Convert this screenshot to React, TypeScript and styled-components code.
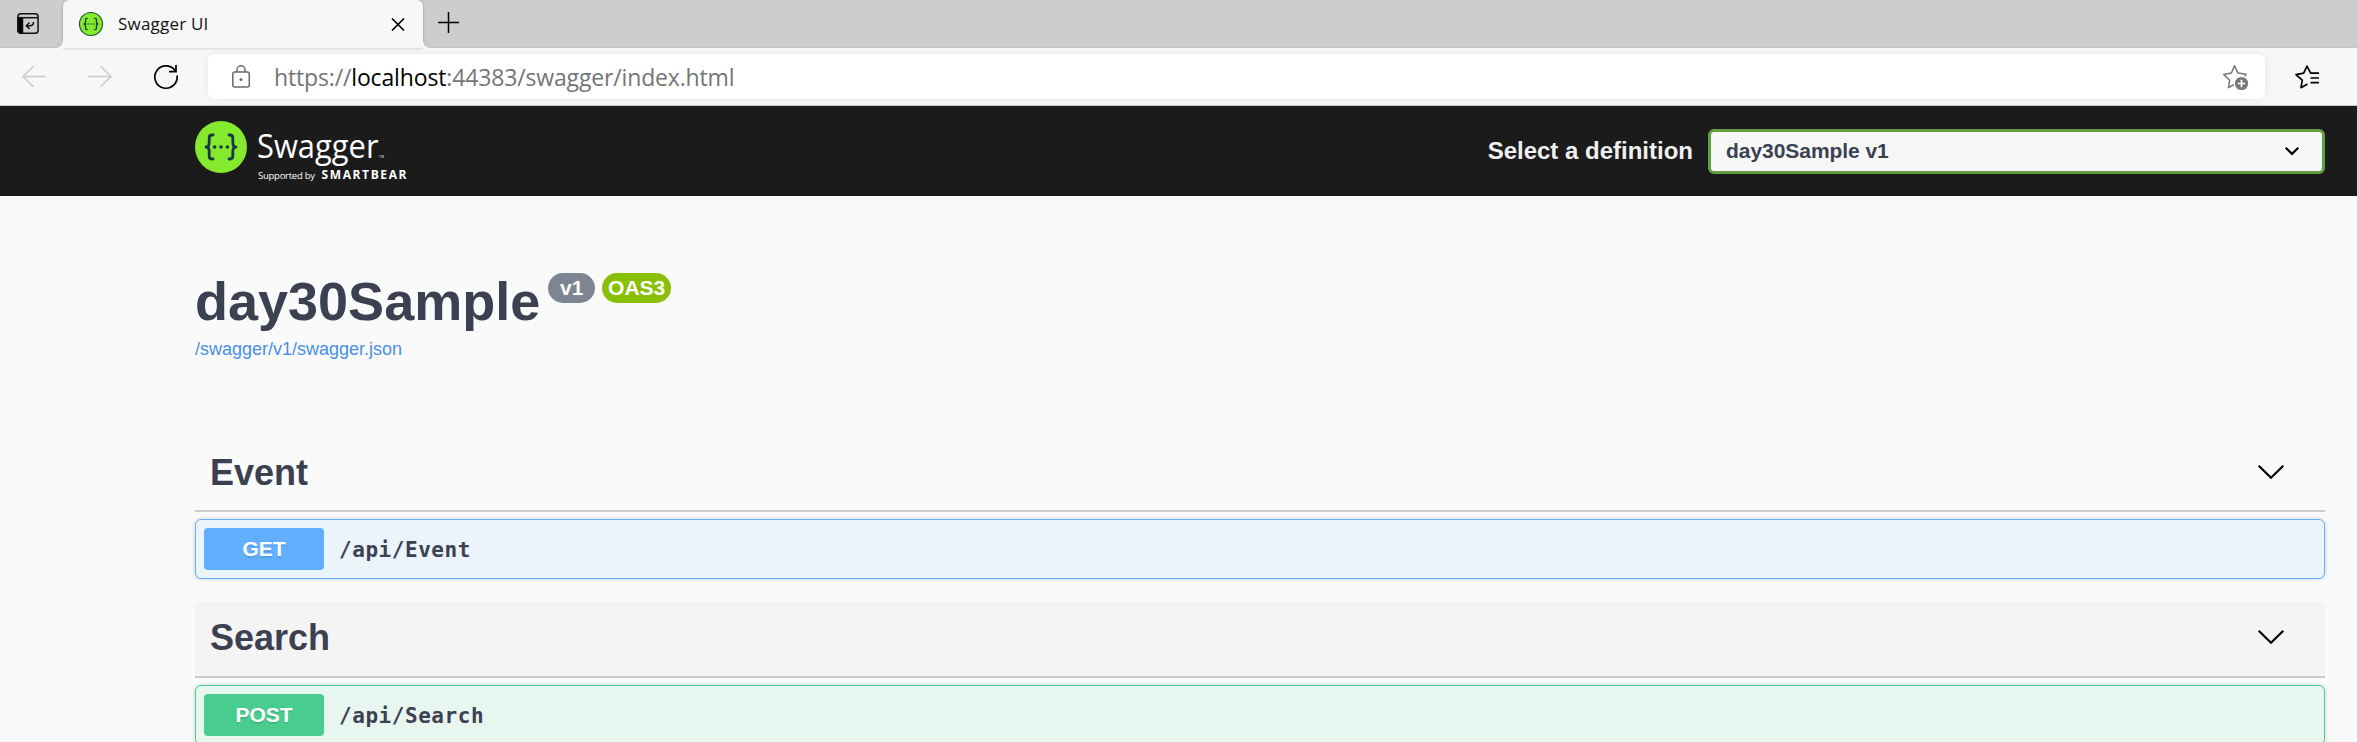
import React from "react";
import styled, { createGlobalStyle } from "styled-components";

const Global = createGlobalStyle`
  *, *::before, *::after { box-sizing: border-box; }
  html, body { margin: 0; padding: 0; background: #fafafa; }
  body { height: 742px; overflow: hidden; font-family: "Liberation Sans", Arial, sans-serif; color: #3b4151; }
  h1, h2 { margin: 0; }
  svg { display: block; flex: none; overflow: visible; }
`;

const Window = styled.div`
  width: 2357px;
  height: 742px;
  overflow: hidden;
  display: flex;
  flex-direction: column;
`;

const TabStrip = styled.div`
  flex: none;
  height: 48px;
  display: flex;
  background: #cdcdcd;
  box-shadow: inset 0 -1px 1px #c2c2c2;
`;

const TabActions = styled.div`
  width: 63px;
  padding: 13px 0 0 17px;
`;

const Tab = styled.div`
  position: relative;
  width: 360px;
  height: 48px;
  display: flex;
  align-items: center;
  padding: 0 18px 0 16px;
  background: #f7f7f7;
  border-radius: 6px 6px 0 0;
  box-shadow: 0 0 3px rgba(0, 0, 0, 0.25);

  &::before,
  &::after {
    content: "";
    position: absolute;
    bottom: 0;
    width: 6px;
    height: 6px;
  }
  &::before {
    left: -6px;
    background: radial-gradient(circle at 0 0, #c6c6c6 5px, #f7f7f7 6px);
  }
  &::after {
    right: -6px;
    background: radial-gradient(circle at 100% 0, #c6c6c6 5px, #f7f7f7 6px);
  }
`;

const TabTitle = styled.span`
  flex: 1;
  margin-left: 15px;
  font: 17px/24px "Open Sans", sans-serif;
  letter-spacing: 0.2px;
  color: #111;
  white-space: nowrap;
`;

const NewTab = styled.div`
  padding: 12px 0 0 15px;
`;

const Toolbar = styled.div`
  flex: none;
  height: 58px;
  display: flex;
  align-items: flex-start;
  padding-top: 6px;
  background: #f7f7f7;
  border-bottom: 1px solid #c6c9c6;
`;

const NavButtons = styled.div`
  width: 208px;
  height: 45px;
  display: flex;
  align-items: center;
  padding-left: 22px;
  gap: 42px;
`;

const AddressBar = styled.div`
  width: 2057px;
  height: 45px;
  display: flex;
  align-items: center;
  padding: 0 16px 0 23px;
  background: #fff;
  border-radius: 6px;
  box-shadow: 0 0 8px rgba(0, 0, 0, 0.07);
`;

const Url = styled.span`
  flex: 1;
  margin-left: 23px;
  font: 23px/32px "Open Sans", sans-serif;
  letter-spacing: -0.15px;
  color: #757575;
  white-space: nowrap;
`;

const Host = styled.span`
  color: #000;
`;

const Favorites = styled.div`
  height: 45px;
  display: flex;
  align-items: center;
  margin-left: 30px;
`;

const TopBar = styled.header`
  flex: none;
  height: 90px;
  display: flex;
  align-items: center;
  justify-content: space-between;
  padding: 0 32px 0 195px;
  background: #1b1b1b;
`;

const Definition = styled.label`
  display: flex;
  align-items: center;
  font-size: 24px;
  font-weight: 700;
  color: #f0f0f0;
`;

const Select = styled.div`
  width: 617px;
  height: 45px;
  margin-left: 15px;
  padding: 0 23px 0 15px;
  display: flex;
  align-items: center;
  justify-content: space-between;
  background: #f7f7f7;
  border: 3px solid #62a03f;
  border-radius: 6px;
  font-size: 21px;
  letter-spacing: -0.05px;
  color: #3b4151;
`;

const Page = styled.main`
  padding: 74px 32px 0 195px;
`;

const Info = styled.section`
  height: 167px;
`;

const TitleRow = styled.div`
  display: flex;
  align-items: flex-start;
`;

const Title = styled.h1`
  font-size: 54px;
  line-height: 62px;
  font-weight: 700;
`;

const Badge = styled.span<{ $bg: string; $width: number; $gap: number }>`
  width: ${(p) => p.$width}px;
  height: 30px;
  margin: 3px 0 0 ${(p) => p.$gap}px;
  border-radius: 15px;
  background: ${(p) => p.$bg};
  color: #fff;
  font-size: 21px;
  font-weight: 700;
  line-height: 30px;
  text-align: center;
`;

const SpecLink = styled.a`
  display: block;
  margin-top: 5px;
  font-size: 18px;
  line-height: 24px;
  color: #4990e2;
`;

const TagHeader = styled.div<{ $hovered?: boolean }>`
  height: ${(p) => (p.$hovered ? 76 : 75)}px;
  display: flex;
  align-items: center;
  justify-content: space-between;
  padding: 0 41px 2px 15px;
  background: ${(p) => (p.$hovered ? "#f4f4f4" : "transparent")};
  border-bottom: 2px solid #c9cacd;

  svg {
    margin-bottom: 2px;
  }
`;

const TagName = styled.h2`
  font-size: 36px;
  line-height: 42px;
`;

const Operation = styled.div<{ $color: string; $bg: string }>`
  height: 60px;
  margin: 7px 0 23px;
  display: flex;
  align-items: center;
  padding: 0 8px;
  border: 1px solid ${(p) => p.$color};
  border-radius: 6px;
  background: ${(p) => p.$bg};
  box-shadow: 0 0 4px rgba(0, 0, 0, 0.19);
`;

const Method = styled.span<{ $bg: string }>`
  width: 120px;
  height: 42px;
  border-radius: 4px;
  background: ${(p) => p.$bg};
  color: #fff;
  font-size: 21px;
  font-weight: 700;
  line-height: 42px;
  text-align: center;
  text-shadow: 0 1.5px 0 rgba(0, 0, 0, 0.1);
`;

const Path = styled.span`
  margin-left: 15px;
  padding-top: 1px;
  font: 700 21px/30px "DejaVu Sans Mono", monospace;
  letter-spacing: 0.55px;
`;

const Braces = ({ color }: { color: string }) => (
  <g fill="none" stroke={color} strokeLinecap="round">
    <path
      strokeWidth="2.8"
      strokeLinejoin="round"
      d="M18 14h-1c-2 0-2.800 1-2.800 3v4.500c0 2.500-1 4.500-3.200 4.500c2.200 0 3.200 2 3.200 4.500V35c0 2 .8 3 2.800 3h1M34 14h1c2 0 2.800 1 2.800 3v4.500c0 2.500 1 4.500 3.200 4.500c-2.200 0-3.200 2-3.200 4.500V35c0 2-.8 3-2.800 3h-1"
    />
    <path strokeWidth="3.600" d="M19.600 26h.01M26 26h.01M32.400 26h.01" />
  </g>
);

const SwaggerLogo = () => (
  <svg width="215" height="60" viewBox="0 0 215 60">
    <circle cx="26" cy="26" r="26" fill="#85ea2d" />
    <Braces color="#173647" />
    <g fill="#fff" fontFamily="Open Sans, sans-serif">
      <text x="62" y="36.500" fontSize="33.500" textLength="121.500" lengthAdjust="spacingAndGlyphs">Swagger</text>
      <text x="184" y="36.500" fontSize="3" textLength="5">TM</text>
      <text x="63" y="58" fontSize="9.500" textLength="57" lengthAdjust="spacing">Supported by</text>
      <text x="126.500" y="58" fontSize="12" fontWeight="700" textLength="85" lengthAdjust="spacing">SMARTBEAR</text>
    </g>
  </svg>
);

const Chevron = () => (
  <svg width="26" height="14" viewBox="0 0 26 14" fill="none" stroke="#000" strokeWidth="2.200">
    <path d="M.7.700 13 12.700 25.300.700" />
  </svg>
);

const App = () => (
  <Window>
    <Global />
    <TabStrip>
      <TabActions>
        <svg width="22" height="21" viewBox="0 0 22 21" fill="none" stroke="#111" strokeWidth="1.500">
          <rect x=".9" y=".8" width="20.200" height="19.400" rx="3" />
          <path d="M1 4.700h20" />
          <path fill="#000" d="M1 4.700h4.500v15.500H3.500a2.500 2.500 0 0 1-2.500-2.500z" />
          <path d="M16.500 9c0 2.500-1 3.700-3.500 3.700H9.500M12.500 9.500 9.300 12.700l3.200 3.200" />
        </svg>
      </TabActions>
      <Tab>
        <svg width="24" height="24" viewBox="0 0 52 52">
          <circle cx="26" cy="26" r="25" fill="#85ea2d" stroke="#255536" strokeWidth="2.500" />
          <Braces color="#173647" />
        </svg>
        <TabTitle>Swagger UI</TabTitle>
        <svg width="13" height="13" viewBox="0 0 13 13" stroke="#000" strokeWidth="1.700">
          <path d="m0 .5 12 12m0-12-12 12" />
        </svg>
      </Tab>
      <NewTab>
        <svg width="21" height="21" viewBox="0 0 21 21" stroke="#000" strokeWidth="1.500">
          <path d="M10.500 0v21M0 10.500h21" />
        </svg>
      </NewTab>
    </TabStrip>
    <Toolbar>
      <NavButtons>
        <svg width="24" height="22" viewBox="0 0 24 22" fill="none" stroke="#cbcbcb" strokeWidth="1.600">
          <path d="M24 10.500H1M11.500.200 1 10.500l10.500 10.300" />
        </svg>
        <svg width="24" height="22" viewBox="0 0 24 22" fill="none" stroke="#cbcbcb" strokeWidth="1.600">
          <path d="M0 10.500h23M12.500.200 23 10.500 12.500 20.800" />
        </svg>
        <svg width="24" height="24" viewBox="0 0 24 24" fill="none" stroke="#000" strokeWidth="1.700">
          <path d="M23.100 10.500A11.200 11.200 0 1 1 20.500 4.700L22 6.500M22 0v6.700h-7" />
        </svg>
      </NavButtons>
      <AddressBar>
        <svg width="20" height="23" viewBox="0 0 20 23" fill="none" stroke="#6b6b6b" strokeWidth="1.500">
          <rect x="1.800" y="7" width="16.500" height="15" rx="2" />
          <path d="M6 7V4.800a4 4 0 0 1 8 0V7" />
          <circle cx="10" cy="14.500" r="1.500" fill="#6b6b6b" stroke="none" />
        </svg>
        <Url>
          https://<Host>localhost</Host>:44383/swagger/index.html
        </Url>
        <svg width="27" height="26" viewBox="0 0 27 26" fill="none" stroke="#777" strokeWidth="1.500">
          <path
            strokeLinejoin="round"
            strokeLinecap="round"
            d="M11.500 21 6.500 23.700 7.700 16.200 1.700 10.400l7.700-1.300L12.500 1.800l3.600 7.300 8 1.100-1 1.600"
          />
          <circle cx="19.500" cy="19.500" r="6.600" fill="#777" stroke="none" />
          <path stroke="#fff" strokeWidth="1.700" d="M15.800 19.500h7.400M19.500 15.800v7.400" />
        </svg>
      </AddressBar>
      <Favorites>
        <svg width="25" height="24" viewBox="0 0 25 24" fill="none" stroke="#000" strokeWidth="1.700">
          <path strokeLinejoin="round" d="M12.500 19 6 22.700 7.300 15.200 1 9.600l7.700-1.400L12 1.200l3.700 7H24" />
          <path d="M15.500 13H24M15.500 17.700H24" />
        </svg>
      </Favorites>
    </Toolbar>
    <TopBar>
      <SwaggerLogo />
      <Definition>
        Select a definition
        <Select>
          day30Sample v1
          <svg width="14" height="8" viewBox="0 0 14 8" fill="none" stroke="#000" strokeWidth="2.200">
            <path d="m.7.700 6.300 6.200L13.300.700" />
          </svg>
        </Select>
      </Definition>
    </TopBar>
    <Page>
      <Info>
        <TitleRow>
          <Title>day30Sample</Title>
          <Badge $bg="#7d8492" $width={47} $gap={8}>v1</Badge>
          <Badge $bg="#89bf04" $width={69} $gap={7}>OAS3</Badge>
        </TitleRow>
        <SpecLink>/swagger/v1/swagger.json</SpecLink>
      </Info>
      <TagHeader>
        <TagName>Event</TagName>
        <Chevron />
      </TagHeader>
      <Operation $color="#61affe" $bg="#ebf3fb">
        <Method $bg="#61affe">GET</Method>
        <Path>/api/Event</Path>
      </Operation>
      <TagHeader $hovered>
        <TagName>Search</TagName>
        <Chevron />
      </TagHeader>
      <Operation $color="#49cc90" $bg="#e8f6f0">
        <Method $bg="#49cc90">POST</Method>
        <Path>/api/Search</Path>
      </Operation>
    </Page>
  </Window>
);

export default App;
